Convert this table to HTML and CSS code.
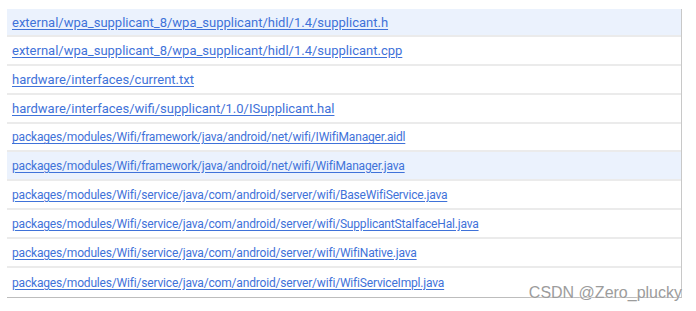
FILE: index.html
```html
<!DOCTYPE html>
<html lang="en">
<head>
  <meta charset="UTF-8" />
  <title>Changed files</title>
  <link rel="stylesheet" href="styles.css">
</head>
<body>

  <!-- changed files list -->
  <div class="file-table">
    <div class="row hl big"><a href="#">external/wpa_supplicant_8/wpa_supplicant/hidl/1.4/supplicant.h</a></div>
    <div class="row big"><a href="#">external/wpa_supplicant_8/wpa_supplicant/hidl/1.4/supplicant.cpp</a></div>
    <div class="row big"><a href="#">hardware/interfaces/current.txt</a></div>
    <div class="row big"><a href="#">hardware/interfaces/wifi/supplicant/1.0/ISupplicant.hal</a></div>
    <div class="row"><a href="#">packages/modules/Wifi/framework/java/android/net/wifi/IWifiManager.aidl</a></div>
    <div class="row hl"><a href="#">packages/modules/Wifi/framework/java/android/net/wifi/WifiManager.java</a></div>
    <div class="row"><a href="#">packages/modules/Wifi/service/java/com/android/server/wifi/BaseWifiService.java</a></div>
    <div class="row"><a href="#">packages/modules/Wifi/service/java/com/android/server/wifi/SupplicantStaIfaceHal.java</a></div>
    <div class="row"><a href="#">packages/modules/Wifi/service/java/com/android/server/wifi/WifiNative.java</a></div>
    <div class="row"><a href="#">packages/modules/Wifi/service/java/com/android/server/wifi/WifiServiceImpl.java</a></div>
  </div>

  <div class="watermark">CSDN @Zero_plucky</div>

</body>
</html>
```

FILE: styles.css
```css
* { margin: 0; padding: 0; box-sizing: border-box; }

body {
  background: #fff;
  font-family: Roboto, 'Liberation Sans', sans-serif;
  padding: 9px 0 0 7px;
  position: relative;
  height: 311px;
  overflow: hidden;
}

.file-table {
  width: 675px;
  border-right: 1px solid #c8c8c8;
  border-bottom: 1px solid #bdbdbd;
}

.row {
  height: 29px;
  display: flex;
  align-items: center;
  padding-left: 5px;
  border-bottom: 2px solid #ebebeb;
  font-size: 12px;
  letter-spacing: -0.18px;
}
.row:first-child { height: 28px; }
.row:nth-child(5) { height: 28px; }
.row:last-child { border-bottom: none; }

.row.big { font-size: 13px; letter-spacing: 0; }
.row.hl { background: #ebf2fd; }

.row a {
  color: #3f72d9;
  text-decoration: underline;
  text-underline-offset: 2px;
}

.watermark {
  position: absolute;
  right: 14px;
  bottom: 9px;
  font-family: 'Liberation Sans', Arial, sans-serif;
  font-size: 16px;
  color: #9c9c9c;
  text-shadow: 0 0 2px #fff;
}
```
